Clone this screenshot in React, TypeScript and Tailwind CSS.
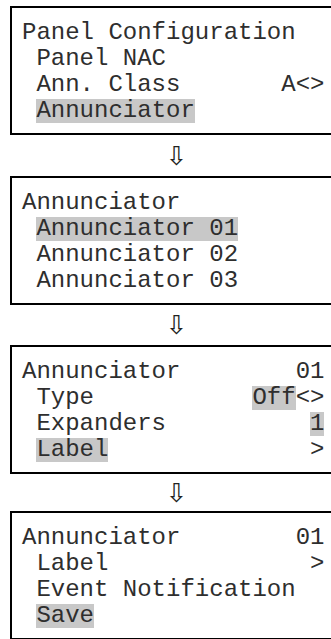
import React from "react";

type Seg = string | { h: string };

const mono = { fontFamily: '"Liberation Mono", "Courier New", monospace' };

function Line({ segs }: { segs: Seg[] }) {
  return (
    <div className="h-[26px] leading-[26px] whitespace-pre">
      {segs.map((s, i) =>
        typeof s === "string" ? (
          <span key={i}>{s}</span>
        ) : (
          <span key={i} className="inline-block bg-[#c8c8c8] leading-[24px]">
            {s.h}
          </span>
        )
      )}
    </div>
  );
}

function Box({ lines }: { lines: Seg[][] }) {
  return (
    <div
      className="ml-[10px] w-[330px] shrink-0 border-2 border-black pl-[10px] pt-[12px] pb-[9px] text-[24px] text-[#2e2e2e]"
      style={mono}
    >
      {lines.map((l, i) => (
        <Line key={i} segs={l} />
      ))}
    </div>
  );
}

function Arrow({ h }: { h: string }) {
  return (
    <div
      className={`flex ${h} items-center justify-center w-[331px] pl-[22px] text-[26px] leading-none text-[#222]`}
      style={{ fontFamily: '"DejaVu Sans", sans-serif' }}
    >
      ⇩
    </div>
  );
}

export default function App() {
  return (
    <div className="w-[331px] h-[639px] overflow-hidden bg-white pt-[6px]">
      <Box
        lines={[
          ["Panel Configuration"],
          [" Panel NAC"],
          [" Ann. Class       A<>"],
          [" ", { h: "Annunciator" }],
        ]}
      />
      <Arrow h="h-[41px]" />
      <Box
        lines={[
          ["Annunciator"],
          [" ", { h: "Annunciator 01" }],
          [" Annunciator 02"],
          [" Annunciator 03"],
        ]}
      />
      <Arrow h="h-[40px]" />
      <Box
        lines={[
          ["Annunciator        01"],
          [" Type           ", { h: "Off" }, "<>"],
          [" Expanders          ", { h: "1" }],
          [" ", { h: "Label" }, "              >"],
        ]}
      />
      <Arrow h="h-[37px]" />
      <Box
        lines={[
          ["Annunciator        01"],
          [" Label              >"],
          [" Event Notification"],
          [" ", { h: "Save" }],
        ]}
      />
    </div>
  );
}
